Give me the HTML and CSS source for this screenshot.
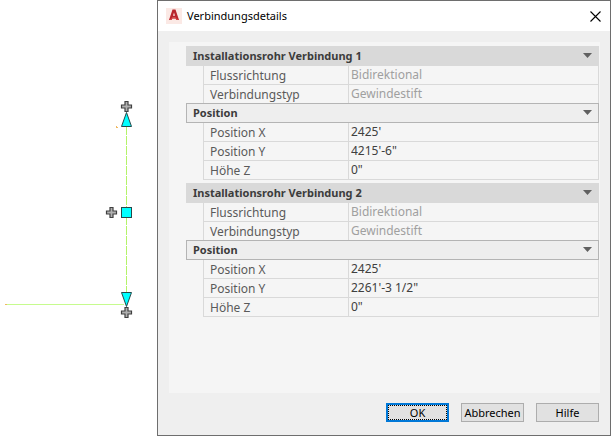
FILE: index.html
```html
<!DOCTYPE html>
<html lang="de">
<head>
<meta charset="utf-8">
<title>Verbindungsdetails</title>
<link rel="stylesheet" href="styles.css">
</head>
<body>
<main class="workspace">
  <svg class="drawing" viewBox="0 0 157 436" aria-hidden="true">
    <defs>
      <path id="plus" d="M-1.5-5h3v3.500h3.500v3h-3.500v3.500h-3v-3.500h-3.500v-3h3.500z" fill="#b0b0b0" stroke="#404040" stroke-width="1.200"/>
    </defs>
    <path d="M126.500 126V292" stroke="#b4f36a" stroke-dasharray="9 1" fill="none"/>
    <path d="M6 304.500H124" stroke="#c6fb8e" fill="none"/>
    <path d="M5 304.500h2M116 127.500h2M116 126.500h1" stroke="#f0b860" fill="none"/>
    <use href="#plus" x="126.500" y="106.500"/>
    <use href="#plus" x="111.500" y="212.500"/>
    <path d="M126.500 112.500L131.500 126.500H121.500Z" fill="#00ffff" stroke="#27484a"/>
    <rect x="121.500" y="207.500" width="10" height="10" fill="#00ffff" stroke="#27484a"/>
    <path d="M121.500 292.500H131.500L126.500 306.500Z" fill="#00ffff" stroke="#27484a"/>
    <use href="#plus" x="126.500" y="312.500"/>
  </svg>

  <section class="dialog" role="dialog" aria-labelledby="dialog-title">
    <header class="titlebar">
      <svg class="logo" viewBox="0 0 16 16" aria-hidden="true">
        <rect width="16" height="16" fill="#fbe9e5"/>
        <path d="M3 12L6.500 1.500H9.500L13 12H10.300L9.600 9.800H6.300L5.600 12Z" fill="#b9252c"/>
        <path d="M7 7.700L8 4.600L9 7.700Z" fill="#fbe9e5"/>
        <path d="M3 12L6.300 9.800H9.600L13 12H10.300L9.600 10.800H6.300L5.600 12Z" fill="#d64545"/>
      </svg>
      <h1 class="title" id="dialog-title">Verbindungsdetails</h1>
      <button class="close" type="button" aria-label="Schließen">
        <svg class="close-icon" viewBox="0 0 11 11"><path d="M.5.5l10 10M10.500.5l-10 10" stroke="#000" stroke-width="1.100" fill="none"/></svg>
      </button>
    </header>

    <form class="content">
      <div class="panel">
        <section class="connection">
          <button class="group" type="button">Installationsrohr Verbindung 1<span class="arrow"></span></button>
          <table class="properties">
            <tr><th><label for="flow1">Flussrichtung</label></th><td><input id="flow1" value="Bidirektional" disabled></td></tr>
            <tr><th><label for="type1">Verbindungstyp</label></th><td><input id="type1" value="Gewindestift" disabled></td></tr>
          </table>
          <button class="group subgroup" type="button">Position<span class="arrow"></span></button>
          <table class="properties">
            <tr><th><label for="x1">Position X</label></th><td><input id="x1" value="2425'"></td></tr>
            <tr><th><label for="y1">Position Y</label></th><td><input id="y1" value="4215'-6&quot;"></td></tr>
            <tr><th><label for="z1">Höhe Z</label></th><td><input id="z1" value="0&quot;"></td></tr>
          </table>
        </section>
        <section class="connection">
          <button class="group" type="button">Installationsrohr Verbindung 2<span class="arrow"></span></button>
          <table class="properties">
            <tr><th><label for="flow2">Flussrichtung</label></th><td><input id="flow2" value="Bidirektional" disabled></td></tr>
            <tr><th><label for="type2">Verbindungstyp</label></th><td><input id="type2" value="Gewindestift" disabled></td></tr>
          </table>
          <button class="group subgroup" type="button">Position<span class="arrow"></span></button>
          <table class="properties">
            <tr><th><label for="x2">Position X</label></th><td><input id="x2" value="2425'"></td></tr>
            <tr><th><label for="y2">Position Y</label></th><td><input id="y2" value="2261'-3 1/2&quot;"></td></tr>
            <tr><th><label for="z2">Höhe Z</label></th><td><input id="z2" value="0&quot;"></td></tr>
          </table>
        </section>
      </div>
      <footer class="actions">
        <button class="action default" type="button"><span class="focus">OK</span></button>
        <button class="action" type="button">Abbrechen</button>
        <button class="action" type="button">Hilfe</button>
      </footer>
    </form>
  </section>
</main>
</body>
</html>
```
FILE: styles.css
```css
* {
  box-sizing: border-box;
}

body {
  margin: 0;
  background: #fff;
  color: #404040;
  font: 12px/16px "Noto Sans", "Open Sans", sans-serif;
}

button,
input {
  font: inherit;
}

.workspace {
  display: flex;
  align-items: stretch;
  min-height: 100vh;
}

.drawing {
  flex: none;
  width: 157px;
  height: 436px;
}

.dialog {
  display: flex;
  flex: 1;
  flex-direction: column;
  min-width: 0;
  border: 1px solid #6e6e6e;
  background: #efefef;
}

.titlebar {
  display: flex;
  align-items: center;
  height: 30px;
  padding: 0 8px;
  background: #fff;
}

.logo {
  width: 16px;
  height: 16px;
}

.title {
  flex: 1;
  margin: 0 0 0 5px;
  color: #000;
  font-size: 11px;
  font-weight: 400;
}

.close {
  display: flex;
  padding: 1px;
  border: 0;
  background: none;
}

.close-icon {
  width: 11px;
  height: 11px;
}

.content {
  display: flex;
  flex: 1;
  flex-direction: column;
  padding: 11px 10px 13px 11px;
}

.panel {
  display: flex;
  flex: 1;
  flex-direction: column;
  gap: 3px;
  padding: 4px 1px 4px 17px;
  background: #f5f5f5;
}

.group {
  display: flex;
  align-items: center;
  justify-content: space-between;
  width: 100%;
  height: 20px;
  padding: 0 7px;
  border: 0;
  background: #d9d9d9;
  color: #3c3c3c;
  font-size: 11px;
  font-weight: 700;
}

.subgroup {
  position: relative;
  margin-top: -1px;
  padding: 0 6px;
  border: 1px solid #b4b4b4;
  background: #eee;
}

.arrow {
  width: 9px;
  height: 5px;
  margin-bottom: 1px;
  background: #606060;
  clip-path: polygon(0 0, 100% 0, 50% 100%);
}

.properties {
  width: calc(100% - 17px);
  margin-left: 17px;
  border-spacing: 0;
  table-layout: fixed;
}

.properties th,
.properties td {
  height: 19px;
  padding: 0;
  border-bottom: 1px solid #d9d9d9;
  border-left: 1px solid #d9d9d9;
}

.properties th {
  width: 145px;
  padding: 2px 0 0 6px;
  color: #5a5a5a;
  font-weight: 400;
  text-align: left;
}

.properties td {
  border-right: 1px solid #d9d9d9;
}

.properties label,
.properties input {
  display: block;
  height: 16px;
}

.properties input {
  width: 100%;
  padding: 0 2px;
  border: 0;
  background: none;
  color: #404040;
}

.properties input:disabled {
  color: #a0a0a0;
}

.actions {
  display: flex;
  justify-content: flex-end;
  gap: 12px;
  margin: 10px 1px 0 0;
}

.action {
  display: flex;
  align-items: center;
  justify-content: center;
  width: 63px;
  height: 19px;
  padding: 0;
  border: 1px solid #adadad;
  background: #e1e1e1;
  color: #000;
  font-size: 11px;
}

.default {
  align-items: stretch;
  border: 2px solid #0078d7;
}

.focus {
  flex: 1;
  border: 1px dotted #000;
  line-height: 13px;
}
```
